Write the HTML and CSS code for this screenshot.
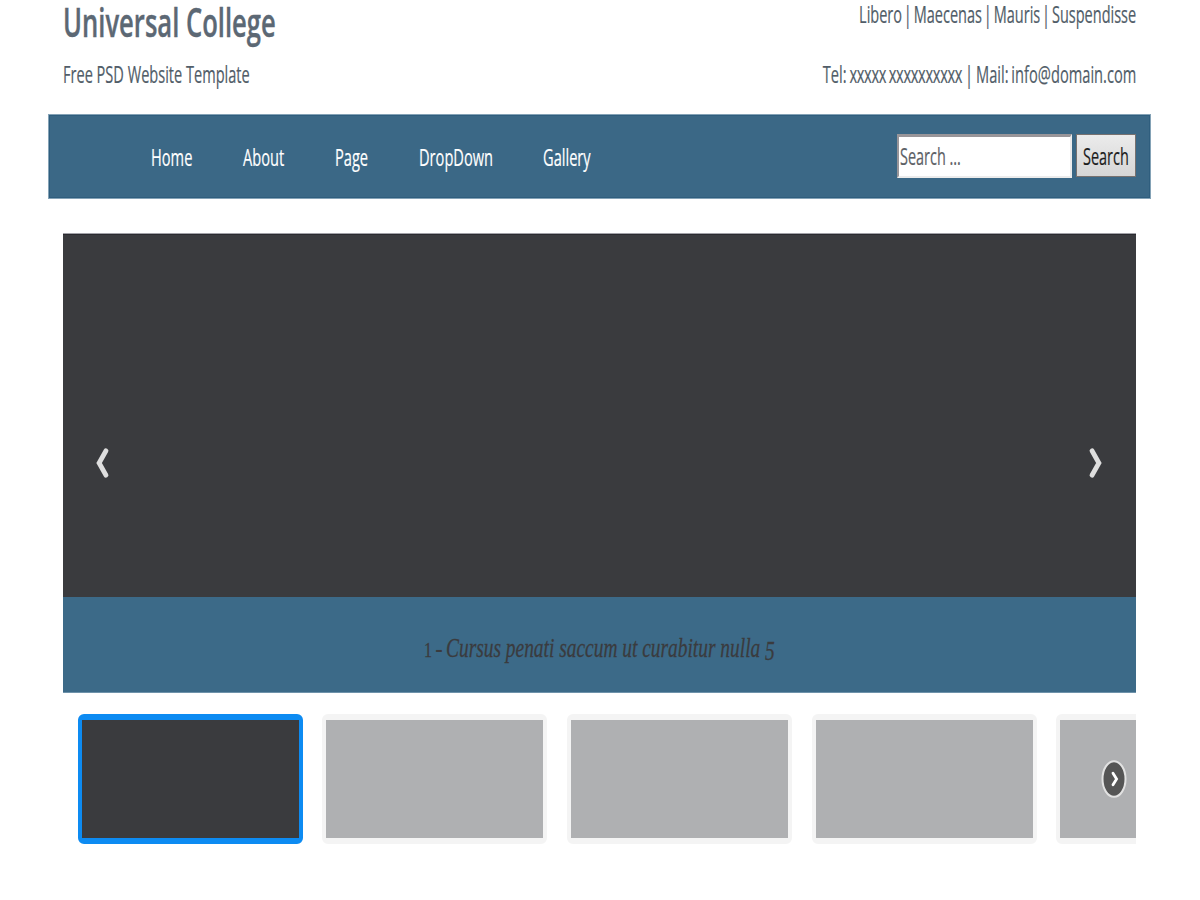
FILE: index.html
```
<!DOCTYPE html>
<html lang="en">
<head>
<meta charset="utf-8">
<title>Universal College</title>
<link rel="stylesheet" href="styles.css">
</head>
<body>
<header class="header">
  <div class="brand">
    <h1 class="title"><span class="narrow">Universal College</span></h1>
    <p class="tagline"><span class="narrow">Free PSD Website Template</span></p>
  </div>
  <div class="contact">
    <p class="links"><span class="narrow">Libero | Maecenas | Mauris | Suspendisse</span></p>
    <p class="details"><span class="narrow">Tel: <span class="phone">xxxxx xxxxxxxxxx</span> | Mail: info@domain.com</span></p>
  </div>
</header>
<nav class="nav">
  <ul class="menu">
    <li class="w-home"><a class="narrow">Home</a></li>
    <li class="w-about"><a class="narrow">About</a></li>
    <li class="w-page"><a class="narrow">Page</a></li>
    <li class="w-drop"><a class="narrow">DropDown</a></li>
    <li class="w-gallery"><a class="narrow">Gallery</a></li>
  </ul>
  <div class="search">
    <div class="field"><span class="narrow">Search ...</span></div>
    <div class="button"><span class="narrow">Search</span></div>
  </div>
</nav>
<main class="content">
  <section class="slide">
    <svg class="arrow" width="14" height="32" viewBox="0 0 14 32"><path d="M10 3.8 3.1 16 10 28.2"/></svg>
    <svg class="arrow" width="14" height="32" viewBox="0 0 14 32"><path d="M4 3.8 10.9 16 4 28.2"/></svg>
  </section>
  <p class="caption"><span class="index"><span class="one">1</span> <span>-</span></span><span class="text">Cursus penati saccum ut curabitur nulla <span class="five">5</span></span></p>
  <div class="thumbs">
    <div class="thumb active"></div>
    <div class="thumb"></div>
    <div class="thumb"></div>
    <div class="thumb"></div>
    <div class="thumb"></div>
    <svg class="next" width="26" height="40" viewBox="0 0 26 40"><ellipse cx="13" cy="20" rx="11.5" ry="17.8"/><path d="M12 14.2 15.6 20 12 25.8"/></svg>
  </div>
</main>
</body>
</html>
```
FILE: styles.css
```
* { box-sizing: border-box; }
body {
  margin: 0;
  background: #fff;
  color: #515d68;
  font: 23px/30px "Open Sans", "Noto Sans", sans-serif;
}
h1, p, ul { margin: 0; padding: 0; }
.narrow {
  display: inline-block;
  white-space: nowrap;
  transform: scaleX(.633);
  transform-origin: left center;
  -webkit-text-stroke: .2px currentColor;
}
.header {
  display: flex;
  justify-content: space-between;
  height: 114px;
  padding: 0 64px 0 63px;
}
.brand, .contact { display: flex; flex-direction: column; }
.title { height: 42px; font-size: 40px; line-height: 44px; font-weight: 600; color: #5c6874; }
.title .narrow { transform: scaleX(.64); -webkit-text-stroke-width: .4px; }
.tagline { margin-top: 17px; }
.contact { align-items: flex-end; }
.contact .narrow { transform-origin: right center; }
.links { height: 28px; line-height: 28px; }
.links .narrow { word-spacing: -3px; transform: scaleX(.631); }
.details { margin-top: 31px; }
.details .narrow { word-spacing: -1.5px; transform: scaleX(.637); }
.phone { letter-spacing: -.5px; }

.nav {
  display: flex;
  justify-content: space-between;
  width: 1103px;
  height: 85px;
  margin-left: 48px;
  padding: 0 14px 0 102px;
  background: #3b6886;
  border: 1px solid #84a2b6;
  box-shadow: inset 0 0 0 1px #2f5e7e;
}
.menu { display: flex; gap: 50px; padding-top: 27px; list-style: none; color: #fff; }
.menu li { height: 30px; }
.menu .narrow { transform: scaleX(.636); }
.w-home { width: 42px; }
.w-about { width: 42px; }
.w-page { width: 34px; }
.w-drop { width: 74px; }
.w-gallery { width: 48px; }
.search { display: flex; gap: 4px; padding-top: 19px; }
.field {
  width: 175px;
  height: 44px;
  padding: 4px 0 0 1px;
  background: #fff;
  border: 2px solid #ececec;
  border-top: 3px solid #989599;
  border-left-color: #989599;
  color: #5d6166;
}
.button {
  width: 60px;
  height: 43px;
  padding: 6px 0 0 6px;
  background: linear-gradient(#ebebeb, #d6d6d6);
  border: 1px solid #77716f;
  color: #1c1c1c;
}
.search .narrow { transform: scaleX(.628); }

.content { width: 1073px; margin: 34px 0 0 63px; }
.slide {
  display: flex;
  justify-content: space-between;
  height: 364px;
  padding: 213px 34px 0 33px;
  background: #3a3b3e;
  border-top: 1px solid #a2a2a8;
  box-shadow: inset 0 1px 0 #2b2b30;
}
.arrow { fill: none; stroke: #dedede; stroke-width: 4.8; stroke-linecap: round; }
.caption {
  display: flex;
  height: 96px;
  padding: 36px 0 0 361px;
  background: #3c6a88;
  border-bottom: 1px solid #6e92aa;
  color: #3a3b3e;
  font: 28px/30px "Liberation Serif", serif;
  white-space: nowrap;
}
.index {
  display: flex;
  align-items: baseline;
  gap: 5px;
  width: 22px;
  transform: scaleX(.8);
  transform-origin: left center;
}
.one { width: 9px; font-size: 20px; -webkit-text-stroke: .3px #3a3b3e; }
.text {
  font-style: italic;
  -webkit-text-stroke: .3px #3a3b3e;
  transform: scaleX(.693);
  transform-origin: left center;
}
.five { position: relative; top: 3px; }

.thumbs {
  position: relative;
  display: flex;
  gap: 19.7px;
  margin-top: 21px;
  padding-left: 14.5px;
  overflow: hidden;
}
.thumb {
  flex: none;
  width: 225px;
  height: 130px;
  background: #afb0b2;
  border: solid #f4f4f4;
  border-width: 6px 4px;
  border-radius: 6px;
}
.active { background: #3a3b3e; border-color: #0d8bf2; }
.next { position: absolute; right: 9px; top: 45px; fill: none; }
.next ellipse { fill: #555; stroke: #e2e2e2; stroke-width: 2; }
.next path { stroke: #fff; stroke-width: 2.8; stroke-linecap: round; }
```
